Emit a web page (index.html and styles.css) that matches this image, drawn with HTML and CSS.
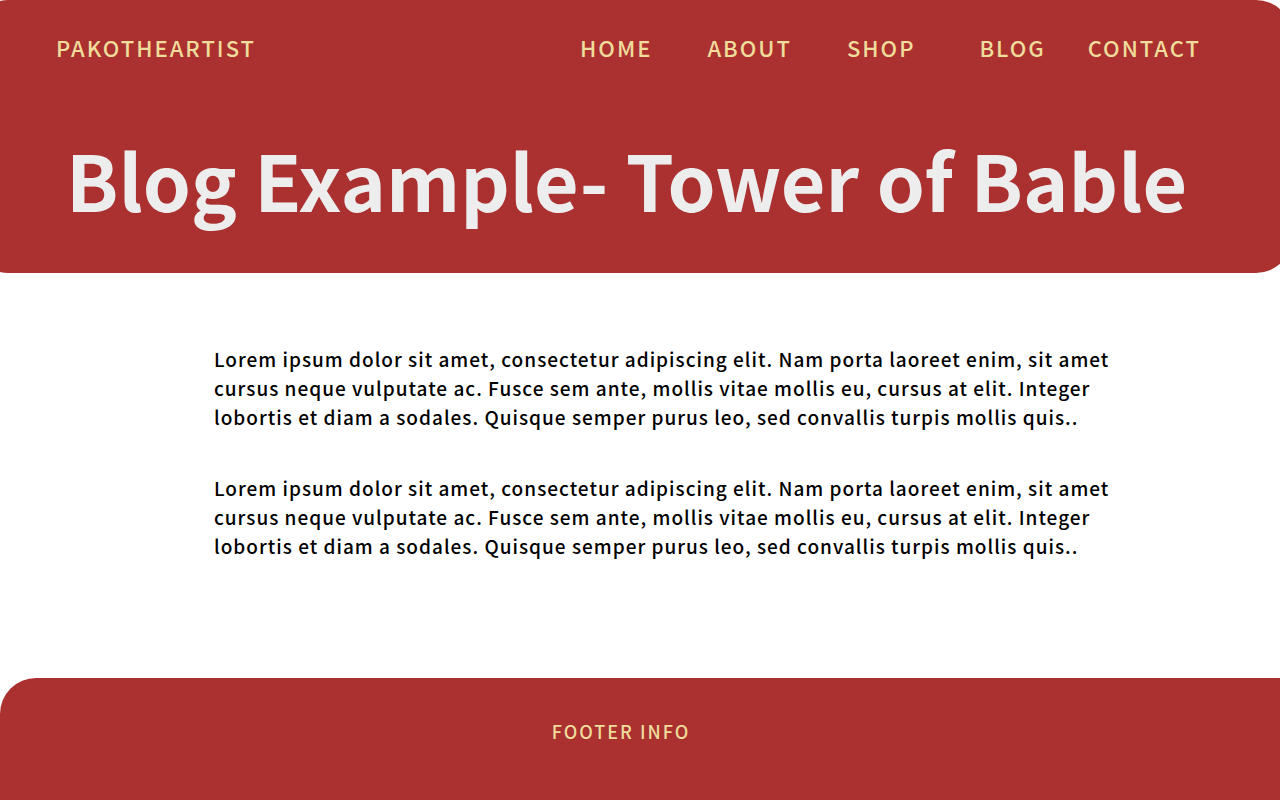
FILE: index.html
```html
<!DOCTYPE html>
<html lang="en">
<head>
<meta charset="utf-8">
<title>Blog Example - PAKOTHEARTIST</title>
<link rel="stylesheet" href="styles.css">
</head>
<body>
<header class="hero">
  <div class="topbar">
    <a class="brand" href="#">PAKOTHEARTIST</a>
    <nav class="nav">
      <a class="nav-home" href="#">HOME</a>
      <a class="nav-about" href="#">ABOUT</a>
      <a class="nav-shop" href="#">SHOP</a>
      <a class="nav-blog" href="#">BLOG</a>
      <a href="#">CONTACT</a>
    </nav>
  </div>
  <h1 class="title">Blog Example- Tower of Bable</h1>
</header>
<main class="article">
  <p>Lorem ipsum dolor sit amet, consectetur adipiscing elit. Nam porta laoreet enim, sit amet cursus neque vulputate ac. Fusce sem ante, mollis vitae mollis eu, cursus at elit. Integer lobortis et diam a sodales. Quisque semper purus leo, sed convallis turpis mollis quis..</p>
  <p>Lorem ipsum dolor sit amet, consectetur adipiscing elit. Nam porta laoreet enim, sit amet cursus neque vulputate ac. Fusce sem ante, mollis vitae mollis eu, cursus at elit. Integer lobortis et diam a sodales. Quisque semper purus leo, sed convallis turpis mollis quis..</p>
</main>
<footer class="footer">FOOTER INFO</footer>
</body>
</html>
```
FILE: styles.css
```css
* { box-sizing: border-box; }
body {
  margin: 0;
  min-height: 100vh;
  display: flex;
  flex-direction: column;
  overflow-x: hidden;
  background: #fff;
  color: #000;
  font-family: "Noto Sans CJK SC", "Noto Sans", sans-serif;
  font-weight: 500;
}
.hero {
  margin: 0 -12px 0 -28px;
  padding: 30px 91px 41px 84px;
  border-radius: 36px;
  background: #aa3130;
}
.topbar {
  display: flex;
  justify-content: space-between;
  font-size: 22px;
  line-height: 34px;
  letter-spacing: 2px;
}
.topbar a { color: #f0dc9b; text-decoration: none; }
.nav { display: flex; }
.nav-home, .nav-about { margin-right: 55px; }
.nav-shop { margin-right: 64px; }
.nav-blog { margin-right: 42px; }
.title {
  margin: 61px 0 0 10px;
  color: #ededed;
  font-size: 77px;
  line-height: 107px;
  font-weight: 700;
  white-space: nowrap;
}
.article {
  flex: 1;
  padding: 71px 160px 72px 214px;
  font-size: 19px;
  line-height: 29px;
  letter-spacing: 1px;
}
.article p { margin: 0 0 42px; }
.footer {
  padding: 39px 38px 55px 0;
  border-radius: 36px 0 0;
  background: #aa3130;
  color: #f0dc9b;
  text-align: center;
  font-size: 18px;
  line-height: 28px;
  letter-spacing: 2px;
}
```
